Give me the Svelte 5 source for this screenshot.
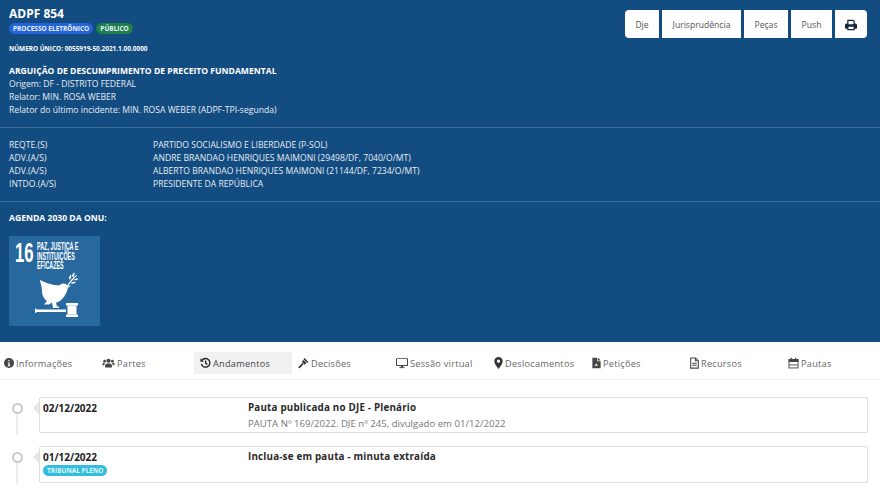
<script lang="ts">
  const parties = [
    ["REQTE.(S)", "PARTIDO SOCIALISMO E LIBERDADE (P-SOL)"],
    ["ADV.(A/S)", "ANDRE BRANDAO HENRIQUES MAIMONI (29498/DF, 7040/O/MT)"],
    ["ADV.(A/S)", "ALBERTO BRANDAO HENRIQUES MAIMONI (21144/DF, 7234/O/MT)"],
    ["INTDO.(A/S)", "PRESIDENTE DA REPÚBLICA"]
  ];

  const tabs = [
    { key: "info", label: "Informações", w: 10, vb: "0 0 16 16" },
    { key: "users", label: "Partes", w: 13, vb: "0 0 16 16" },
    { key: "history", label: "Andamentos", w: 11, vb: "0 0 16 16", active: true },
    { key: "gavel", label: "Decisões", w: 11, vb: "0 0 16 16" },
    { key: "desktop", label: "Sessão virtual", w: 12, vb: "0 0 16 16" },
    { key: "marker", label: "Deslocamentos", w: 9, vb: "2 0 12 16" },
    { key: "pdf", label: "Petições", w: 9, vb: "2 0 12 16" },
    { key: "file", label: "Recursos", w: 9, vb: "2 0 12 16" },
    { key: "calendar", label: "Pautas", w: 11, vb: "0 0 16 16" }
  ];
</script>

<main>
  <header class="hero">
    <div class="top">
      <div>
        <h1>ADPF 854</h1>
        <div class="badges">
          <span class="badge blue">PROCESSO ELETRÔNICO</span>
          <span class="badge green">PÚBLICO</span>
        </div>
        <p class="numero">NÚMERO ÚNICO: 0055919-50.2021.1.00.0000</p>
      </div>
      <div class="actions">
        <button>Dje</button>
        <button>Jurisprudência</button>
        <button>Peças</button>
        <button>Push</button>
        <button class="print" aria-label="Imprimir">
          <svg viewBox="0 0 16 16" width="12" height="12">
            <path fill="#12263f" d="M3 1h8.2L13 2.8V6h1a2 2 0 0 1 2 2v4a1 1 0 0 1-1 1h-2v2H3v-2H1a1 1 0 0 1-1-1V8a2 2 0 0 1 2-2h1zm1.6 1.6V7h6.800V3.500l-.9-.9zm0 7.800v3h6.800v-3z" fill-rule="evenodd"/>
          </svg>
        </button>
      </div>
    </div>

    <div class="classe">
      <strong>ARGUIÇÃO DE DESCUMPRIMENTO DE PRECEITO FUNDAMENTAL</strong>
      <div>Origem: DF - DISTRITO FEDERAL</div>
      <div>Relator: MIN. ROSA WEBER</div>
      <div>Relator do último incidente: MIN. ROSA WEBER (ADPF-TPI-segunda)</div>
    </div>

    <hr />

    <div class="partes">
      {#each parties as [role, name]}
        <span>{role}</span>
        <span>{name}</span>
      {/each}
    </div>

    <hr />

    <div class="agenda">AGENDA 2030 DA ONU:</div>
    <div class="ods">
      <div class="ods-head">
        <span class="ods-num">16</span>
        <span class="ods-text">PAZ, JUSTIÇA E<br />INSTITUIÇÕES<br />EFICAZES</span>
      </div>
      <svg class="dove" viewBox="0 0 56 52" width="56" height="52">
        <g fill="#fff">
          <path d="M10 10c4 2 9 4 14 5 3 0 5 1 6 0 2-2 5-2 7 0l4 1-3 1.500c-1 5-4 11-9 14-1 .5-2 1-3 1l1 4h2v1.500h-6l-1-5.500-3 2H14l3-3.500c-3-2-5-6-5-9 0-4-1-8-2-11z"/>
          <path d="M37.500 15c2-4 5-7 9-10l.6.6c-3 3-6 6-8.600 10z"/>
          <path d="M39 9c0-2 .5-3.500 2-4.500.7 1.500.3 3.500-1 5zM42 6.500c0-2 1-3.500 2.500-4 .4 1.500 0 3-1.200 4.500zM41 13c1.500-1.200 3-1.500 5-1-1 1.500-3 2-5 1.500zM44 9.500c1.500-1 3-1.200 4.500-.7-1 1.300-2.700 1.800-4.500 1.300z"/>
          <path d="M5 38.500h1.300v1h29.700v2.500H6.300v1H5z"/>
          <rect x="36" y="33" width="12" height="2.500"/>
          <rect x="37.500" y="35.500" width="9" height="9"/>
          <rect x="36" y="44.500" width="12" height="2.500"/>
        </g>
      </svg>
    </div>
  </header>

  <nav class="tabs">
    {#each tabs as tab}
      <div class="tab" class:active={tab.active}>
        <svg viewBox={tab.vb} width={tab.w} height="12" class="icon">
          {#if tab.key === "info"}
            <path fill="#444" fill-rule="evenodd" d="M8 0a8 8 0 1 1 0 16A8 8 0 0 1 8 0zM7 3v2.200h2V3zM6 7v1.500h1v3H6V13h4v-1.500H9V7z"/>
          {:else if tab.key === "users"}
            <g fill="#444"><circle cx="8" cy="5" r="2.800"/><circle cx="2.800" cy="5.500" r="1.800"/><circle cx="13.200" cy="5.500" r="1.800"/><path d="M3.500 14v-2.500c0-2 1.500-3 3-3h3c1.500 0 3 1 3 3V14z"/><path d="M0 11V9.500c0-1 .8-1.800 2-1.800h1.800A4 4 0 0 0 2.400 11zM16 11V9.500c0-1-.8-1.800-2-1.800h-1.800a4 4 0 0 1 1.400 3.300z"/></g>
          {:else if tab.key === "history"}
            <g fill="none" stroke="#222" stroke-width="1.900"><path d="M3 4a6.300 6.300 0 1 1-1 5.500"/><path d="M8.200 4.500V8.500l2.500 1.500"/></g>
            <path fill="#222" d="M.6 1.200V6.300h5.100z"/>
          {:else if tab.key === "gavel"}
            <g fill="#333"><path d="M9.500.8l5.700 5.700-1.600 1.600-5.700-5.700z"/><path d="M8 3.800l4.200 4.200-2.500 2.500-4.200-4.200z"/><path d="M6.300 8l1.700 1.700-5.300 5.500a1.200 1.200 0 0 1-1.700-1.700z"/></g>
          {:else if tab.key === "desktop"}
            <g fill="#444"><path fill-rule="evenodd" d="M1 1.500h14a1 1 0 0 1 1 1V11a1 1 0 0 1-1 1H1a1 1 0 0 1-1-1V2.500a1 1 0 0 1 1-1zm.3 1.300v7.900h13.400V2.800z"/><rect x="6.500" y="12" width="3" height="2"/><rect x="4.500" y="13.600" width="7" height="1.200"/></g>
          {:else if tab.key === "marker"}
            <path fill="#333" fill-rule="evenodd" d="M8 0a5.600 5.600 0 0 1 5.600 5.600C13.600 9 10 13 8 16 6 13 2.400 9 2.400 5.600A5.600 5.600 0 0 1 8 0zm0 3.400a2.200 2.200 0 1 0 0 4.400 2.200 2.200 0 0 0 0-4.400z"/>
          {:else if tab.key === "pdf"}
            <path fill="#444" fill-rule="evenodd" d="M2.500 1h6.500v4.500h4.500V15H2.500zM10 1l3.500 3.500H10zM5 13c1-1 2-3 2.500-5 .7 2 1.700 2.800 3.300 3-1.800.2-3.500.7-5.800 2z"/>
          {:else if tab.key === "file"}
            <g fill="none" stroke="#444" stroke-width="1.400"><path d="M2.900 1.200h6.600L13.100 4.800V14.800H2.900z"/><path d="M9.300 1.200V5h3.800M5 8.200h6M5 11h6"/></g>
          {:else}
            <g fill="none" stroke="#444" stroke-width="1.300"><rect x="1.400" y="2.800" width="13.200" height="12.400"/><path d="M1.400 10.800h13.200"/></g>
            <path fill="#444" d="M4 .5h1.700v3.500H4zM10.300.5H12v3.500h-1.700zM1 2.500h14v4H1z"/>
          {/if}
        </svg>
        <span>{tab.label}</span>
      </div>
    {/each}
  </nav>

  <section class="timeline">
    <article class="item">
      <div class="marker"><i></i><b></b></div>
      <div class="card first">
        <div class="date">02/12/2022</div>
        <div class="body">
          <div class="title">Pauta publicada no DJE - Plenário</div>
          <div class="sub">PAUTA Nº 169/2022. DJE nº 245, divulgado em 01/12/2022</div>
        </div>
      </div>
    </article>
    <article class="item">
      <div class="marker"><i></i><b></b></div>
      <div class="card second">
        <div class="date">
          01/12/2022
          <span class="badge cyan">TRIBUNAL PLENO</span>
        </div>
        <div class="body">
          <div class="title">Inclua-se em pauta - minuta extraída</div>
        </div>
      </div>
    </article>
  </section>
</main>

<style>
  :global(body) {
    margin: 0;
    background: #fff;
    font-family: "Open Sans", "Noto Sans", sans-serif;
    overflow: hidden;
  }

  main {
    width: 880px;
    height: 494px;
    overflow: hidden;
  }

  .hero {
    box-sizing: border-box;
    height: 342px;
    padding: 6px 0 0;
    background: #134c80;
    color: #f2f6fa;
    font-size: 8.600px;
  }

  .top {
    display: flex;
    justify-content: space-between;
    padding: 0 13px 0 9px;
  }

  h1 {
    margin: 0;
    font-size: 12px;
    line-height: 15px;
    font-weight: 700;
    color: #fff;
  }

  .badges {
    display: flex;
    gap: 3px;
    margin-top: 2px;
  }

  .badge {
    display: inline-block;
    padding: 0 4px;
    height: 11px;
    line-height: 11px;
    border-radius: 6px;
    font-size: 6.500px;
    font-weight: 700;
    color: #e8f0fa;
    white-space: nowrap;
  }

  .blue {
    background: #2563d8;
  }

  .green {
    background: #1c7f4c;
  }

  .cyan {
    display: block;
    width: fit-content;
    background: #33bede;
    color: #dff6fb;
  }

  .numero {
    margin: 10px 0 0;
    font-size: 6.430px;
    line-height: 10px;
    font-weight: 700;
    color: #fff;
  }

  .actions {
    display: flex;
    gap: 3px;
    margin-top: 4px;
    height: 28px;
  }

  button {
    padding: 1px 0 0;
    border: 0;
    background: #fff;
    color: #555;
    font: inherit;
    font-size: 8.600px;
    height: 28px;
  }

  .actions button:nth-child(1) {
    width: 34px;
    border-radius: 4px 0 0 4px;
  }

  .actions button:nth-child(2) {
    width: 79px;
  }

  .actions button:nth-child(3) {
    width: 44px;
  }

  .actions button:nth-child(4) {
    width: 41px;
  }

  .print {
    display: flex;
    align-items: center;
    justify-content: center;
    width: 32px;
    border-radius: 0 4px 4px 0;
  }

  .classe {
    margin-top: 11px;
    padding: 0 9px;
    line-height: 13px;
    color: #e6edf4;
  }

  .classe strong {
    color: #fff;
  }

  hr {
    margin: 10px 0;
    border: 0;
    border-top: 1px solid #3d6d9b;
  }

  .partes {
    display: grid;
    grid-template-columns: 144px 1fr;
    padding: 1px 9px 0;
    line-height: 13px;
    color: #e6edf4;
  }

  .agenda {
    margin-top: 10px;
    padding: 0 9px;
    font-weight: 700;
    line-height: 12px;
    color: #fff;
  }

  .ods {
    box-sizing: border-box;
    width: 91px;
    height: 90px;
    margin: 12px 0 0 9px;
    padding: 6px 6px 0;
    background: #27689f;
  }

  .ods-head {
    display: flex;
    gap: 4px;
    height: 28px;
    color: #fff;
    font-family: "Liberation Sans", sans-serif;
    font-weight: 700;
  }

  .ods-num {
    width: 18px;
    font-size: 27px;
    line-height: 22px;
    transform: scaleX(0.62);
    transform-origin: left;
  }

  .ods-text {
    font-size: 10px;
    line-height: 9.500px;
    white-space: nowrap;
    transform: scaleX(0.54);
    transform-origin: left top;
  }

  .dove {
    display: block;
    margin-left: 15px;
  }

  .tabs {
    display: grid;
    grid-template-columns: repeat(9, 98px);
    box-sizing: border-box;
    height: 38px;
    margin-left: -2px;
    padding-top: 10px;
    width: 882px;
    border-bottom: 1px solid #f0f0f0;
    font-size: 9.200px;
    color: #666;
    letter-spacing: 0.25px;
  }

  .tab {
    display: flex;
    align-items: center;
    gap: 2px;
    height: 22px;
    padding: 0 6px;
    box-sizing: border-box;
    white-space: nowrap;
  }

  .tab .icon {
    flex: none;
  }

  .tab.active {
    background: #f1f1f1;
    color: #444;
  }

  .timeline {
    padding-top: 17px;
  }

  .item {
    display: flex;
    margin-bottom: 13px;
  }

  .marker {
    display: flex;
    flex-direction: column;
    align-items: center;
    width: 34px;
    height: 36px;
    padding-top: 6px;
    box-sizing: border-box;
    flex: none;
  }

  .marker i {
    flex: none;
    box-sizing: border-box;
    width: 11px;
    height: 11px;
    border: 2px solid #c9c9c9;
    border-radius: 50%;
    background: #fff;
  }

  .marker b {
    flex: none;
    width: 2px;
    height: 21px;
    background: #ececec;
  }

  .card {
    position: relative;
    display: flex;
    box-sizing: border-box;
    width: 829px;
    margin-left: 5px;
    border: 1px solid #dedede;
    border-radius: 2px;
    padding: 3px 0 0 3px;
  }

  .first {
    height: 36px;
  }

  .second {
    height: 37px;
  }

  .card::before {
    content: "";
    position: absolute;
    left: -7px;
    top: 4px;
    border: 6px solid transparent;
    border-left: 0;
    border-right-color: #e6e6e6;
  }

  .date {
    width: 205px;
    font-size: 10px;
    line-height: 15px;
    font-weight: 700;
    color: #222;
  }

  .title {
    font-size: 9.800px;
    line-height: 14px;
    font-weight: 700;
    color: #2a2a2a;
    letter-spacing: 0.2px;
  }

  .sub {
    margin-top: 2px;
    font-size: 9.600px;
    line-height: 14px;
    color: #777;
  }
</style>
